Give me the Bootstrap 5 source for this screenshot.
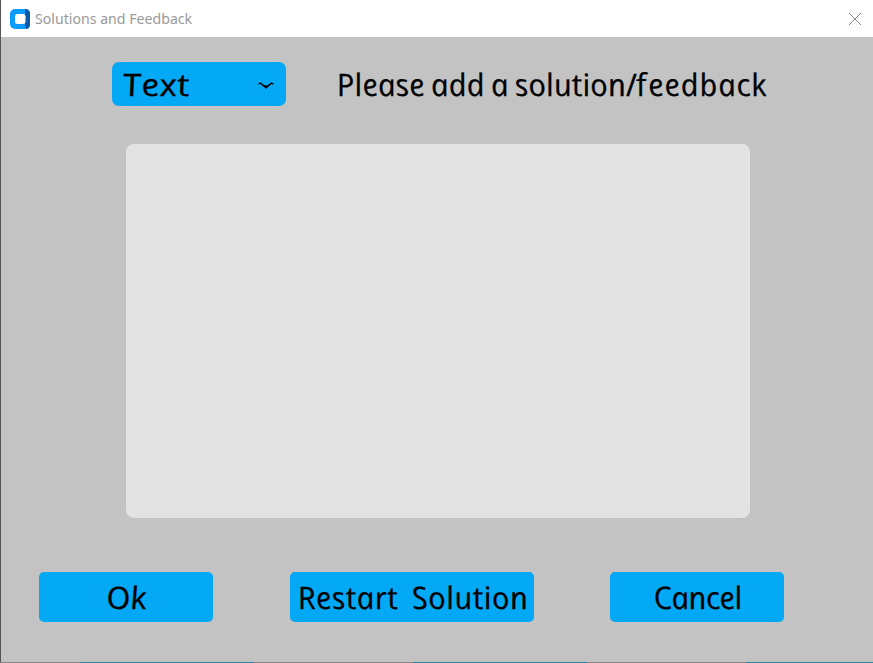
<!DOCTYPE html>
<html lang="en">
<head>
<meta charset="utf-8">
<meta name="viewport" content="width=device-width, initial-scale=1">
<title>Solutions and Feedback</title>
<link href="https://cdn.jsdelivr.net/npm/bootstrap@5.3.0/dist/css/bootstrap.min.css" rel="stylesheet">
<style>
body{width:873px;height:663px;overflow:hidden;background:#c3c3c3;color:#000}
.titlebar{height:37px;padding:0 12px 0 9px}
.titlebar-name{font:14.5px/20px "Noto Sans","Open Sans",sans-serif;color:#999;margin:0 0 2px 5px;white-space:nowrap}
.titlebar-name span{display:inline-block;transform-origin:0 50%;transform:scaleX(.975)}
.window{border-left:1px solid #555}
.content{height:625px;padding-top:25px}
/* upright italic forms give the rounded single-storey letters */
.hand{display:inline-block;font:italic 500 31px/44px "Open Sans","Noto Sans",sans-serif;transform:skewX(12deg);white-space:nowrap;-webkit-text-stroke:.25px #000}
.plain{display:inline-block;font-style:normal;transform:skewX(-12deg)}
.t-prompt{letter-spacing:.15px;word-spacing:-2px}
.t-prompt .tail{letter-spacing:.8px}
.t-text{letter-spacing:.3px;transform-origin:0 50%;transform:scaleX(1.17) skewX(10deg)}
.t-restart{letter-spacing:.55px;word-spacing:5px}
.t-ok{transform:scaleX(1.07) skewX(8deg)}
.t-cancel{letter-spacing:-.5px}
.blue,.blue:hover{background:#03a9f4;color:#000;border:0;border-radius:5px;padding:0}
.kind{width:174px;height:44px;margin-left:111px;border-radius:7px;padding:0 11px 0 10px}
.kind:hover{border-radius:7px;padding:0 11px 0 10px}
.kind svg{margin-top:4px}
.prompt{margin-left:50px;height:44px}
.answer{display:block;width:624px;height:374px;margin:38px 0 0 125px;background:#e3e3e3;border:0;border-radius:8px;resize:none}
.actions{margin:54px 0 0 38px}
.actions .btn{height:50px;width:174px}
.actions .wide{width:244px;margin:0 76px 0 77px}
.edge{height:1px;background:linear-gradient(90deg,#888 80px,#2484a8 80px 254px,#888 254px 413px,#2484a8 413px 587px,#888 587px 746px,#2484a8 746px)}
</style>
</head>
<body>
<div class="window">
<header class="titlebar bg-white d-flex align-items-center">
<svg width="20" height="20" viewBox="0 0 20 20" aria-hidden="true"><rect width="20" height="20" rx="5" fill="#0a9bff"/><path d="M15 0Q20 0 20 5V15Q20 20 16 20L15 16V5Z" fill="#0759a9"/><rect x="5" y="5" width="10.5" height="10" rx="2.3" fill="#fff"/></svg>
<div class="titlebar-name"><span>Solutions and Feedback</span></div>
<svg class="ms-auto" width="12" height="12" viewBox="0 0 12 12" role="img" aria-label="Close"><path d="M0 0L12 12M12 0L0 12" stroke="#858585" stroke-width="1"/></svg>
</header>
<main class="content">
<div class="d-flex">
<button class="btn blue kind d-flex align-items-center justify-content-between"><span class="hand t-text">Text</span>
<svg width="18" height="10" viewBox="0 0 18 10" aria-hidden="true"><path d="M1.5 3.3L3.5 2L6 4L9 5.5L12 4L14.5 2L16.5 3.3" fill="none" stroke="#000" stroke-width="1.3"/><path d="M3.5 3L9 7.8L14.5 3L9 5Z"/></svg></button>
<div class="prompt"><span class="hand t-prompt">Please add a solution/<span class="tail"><span class="plain">f</span>eedback</span></span></div>
</div>
<textarea class="answer" aria-label="Solution or feedback"></textarea>
<div class="actions d-flex">
<button class="btn blue"><span class="hand t-ok">Ok</span></button>
<button class="btn blue wide"><span class="hand t-restart">Restart Solution</span></button>
<button class="btn blue"><span class="hand t-cancel">Cancel</span></button>
</div>
</main>
</div>
<div class="edge"></div>
<script src="https://cdn.jsdelivr.net/npm/bootstrap@5.3.0/dist/js/bootstrap.bundle.min.js"></script>
</body>
</html>
